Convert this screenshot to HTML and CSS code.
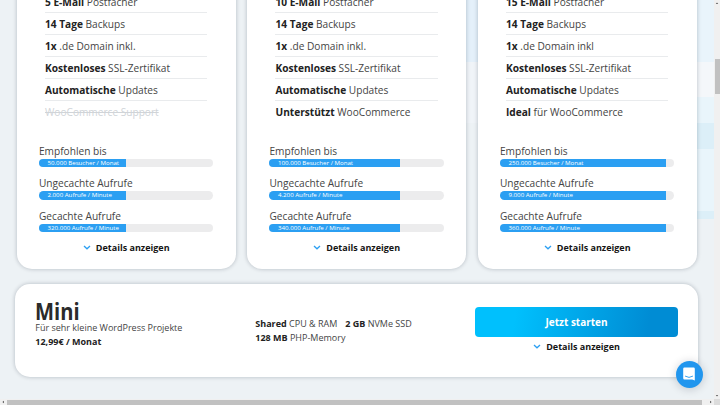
FILE: index.html
```html
<!DOCTYPE html>
<html lang="de">
<head>
    <meta charset="UTF-8">
    <meta name="viewport" content="width=device-width, initial-scale=1.0">
    <title>WordPress Hosting</title>
    <link rel="stylesheet" href="styles.css">
</head>
<body>
    <div class="window">
        <main class="page">
            <div class="plans">
                <div class="card">
                    <ul class="features">
                        <li><b>5 E-Mail</b> Postfächer</li>
                        <li><b>14 Tage</b> Backups</li>
                        <li><b>1x</b> .de Domain inkl.</li>
                        <li><b>Kostenloses</b> SSL-Zertifikat</li>
                        <li><b>Automatische</b> Updates</li>
                        <li class="missing">WooCommerce Support</li>
                    </ul>
                    <div class="limits">
                        <p>Empfohlen bis</p>
                        <div class="bar"><div class="fill" style="width: 50%">50.000 Besucher / Monat</div></div>
                        <p>Ungecachte Aufrufe</p>
                        <div class="bar"><div class="fill" style="width: 50%">2.000 Aufrufe / Minute</div></div>
                        <p>Gecachte Aufrufe</p>
                        <div class="bar"><div class="fill" style="width: 50%">320.000 Aufrufe / Minute</div></div>
                    </div>
                    <a class="details"><svg viewBox="0 0 8 5"><path d="M1 1l3 2.8L7 1"/></svg>Details anzeigen</a>
                </div>
                <div class="card">
                    <ul class="features">
                        <li><b>10 E-Mail</b> Postfächer</li>
                        <li><b>14 Tage</b> Backups</li>
                        <li><b>1x</b> .de Domain inkl.</li>
                        <li><b>Kostenloses</b> SSL-Zertifikat</li>
                        <li><b>Automatische</b> Updates</li>
                        <li><b>Unterstützt</b> WooCommerce</li>
                    </ul>
                    <div class="limits">
                        <p>Empfohlen bis</p>
                        <div class="bar"><div class="fill" style="width: 75%">100.000 Besucher / Monat</div></div>
                        <p>Ungecachte Aufrufe</p>
                        <div class="bar"><div class="fill" style="width: 75%">4.200 Aufrufe / Minute</div></div>
                        <p>Gecachte Aufrufe</p>
                        <div class="bar"><div class="fill" style="width: 75%">340.000 Aufrufe / Minute</div></div>
                    </div>
                    <a class="details"><svg viewBox="0 0 8 5"><path d="M1 1l3 2.8L7 1"/></svg>Details anzeigen</a>
                </div>
                <div class="card">
                    <ul class="features">
                        <li><b>15 E-Mail</b> Postfächer</li>
                        <li><b>14 Tage</b> Backups</li>
                        <li><b>1x</b> .de Domain inkl</li>
                        <li><b>Kostenloses</b> SSL-Zertifikat</li>
                        <li><b>Automatische</b> Updates</li>
                        <li><b>Ideal</b> für WooCommerce</li>
                    </ul>
                    <div class="limits">
                        <p>Empfohlen bis</p>
                        <div class="bar"><div class="fill" style="width: 95%">250.000 Besucher / Monat</div></div>
                        <p>Ungecachte Aufrufe</p>
                        <div class="bar"><div class="fill" style="width: 95%">9.000 Aufrufe / Minute</div></div>
                        <p>Gecachte Aufrufe</p>
                        <div class="bar"><div class="fill" style="width: 95%">360.000 Aufrufe / Minute</div></div>
                    </div>
                    <a class="details"><svg viewBox="0 0 8 5"><path d="M1 1l3 2.8L7 1"/></svg>Details anzeigen</a>
                </div>
            </div>

            <div class="mini">
                <div class="mini-title">
                    <h2>Mini</h2>
                    <p>Für sehr kleine WordPress Projekte</p>
                    <b>12,99€ / Monat</b>
                </div>
                <div class="mini-specs">
                    <span><b>Shared</b> CPU &amp; RAM</span>
                    <span><b>2 GB</b> NVMe SSD</span>
                    <span><b>128 MB</b> PHP-Memory</span>
                </div>
                <div class="mini-order">
                    <a class="button">Jetzt starten</a>
                    <a class="details"><svg viewBox="0 0 8 5"><path d="M1 1l3 2.8L7 1"/></svg>Details anzeigen</a>
                </div>
            </div>
        </main>

        <div class="scroll-y">
            <svg viewBox="0 0 6 6"><path d="M1.8 4L3 2.4 4.2 4z"/></svg>
            <div class="thumb"></div>
            <svg viewBox="0 0 6 6"><path d="M1.8 2L3 3.6 4.2 2z"/></svg>
        </div>
        <div class="scroll-x">
            <svg viewBox="0 0 6 6"><path d="M4 1.8L2.4 3 4 4.2z"/></svg>
            <div class="thumb"></div>
            <svg viewBox="0 0 6 6"><path d="M2 1.8L3.6 3 2 4.2z"/></svg>
        </div>
        <div class="corner"></div>
    </div>

    <!-- Chat launcher -->
    <div class="chat">
        <svg viewBox="0 0 14 14">
            <path fill="#fff" d="M2.4 .6h9.2q1.2 0 1.2 1.2v11.8l-2.6-1.2H2.4q-1.2 0-1.2-1.2V1.8q0-1.2 1.2-1.2z"/>
            <path fill="none" stroke="#2196ee" stroke-width=".9" stroke-linecap="round" d="M3.4 9.3q3.6 2.4 7.2 0"/>
        </svg>
    </div>
</body>
</html>
```
FILE: styles.css
```css
* {
    box-sizing: border-box;
}
body {
    margin: 0;
    font-family: 'Open Sans', 'Noto Sans', sans-serif;
    color: #444;
    overflow: hidden;
}
b {
    color: #222;
    font-weight: 700;
}
p {
    margin: 0;
}
.window {
    display: grid;
    grid-template-columns: 714px 6px;
    grid-template-rows: 399px 6px;
    width: 720px;
    height: 405px;
}
.page {
    overflow: hidden;
    padding: 0 15px;
    background:
        linear-gradient(#e9f4fb 62px, #f4f7fa 62px, #f4f7fa 97px, #e9f5fb 97px, #e9f5fb 123px, #dceff8 123px, #dceff8 149px, #e9f5fb 149px, #e9f5fb 211px, #dceff8 211px, #dceff8 219px, transparent 219px) 697px 0 / 17px 100% no-repeat,
        linear-gradient(#e4f0fa 62px, #f0f4f8 62px, #f0f4f8 123px, transparent 123px) 466px 0 / 12px 100% no-repeat,
        #edf2f5;
}
.plans {
    display: grid;
    grid-template-columns: repeat(3, 219px);
    gap: 11.5px;
    margin: -30px 0 0 1.7px;
}
.card {
    height: 298.5px;
    padding: 20.9px 22.3px 0;
    background-color: white;
    border-radius: 15px;
    box-shadow: 0 0 4px rgba(0, 20, 40, 0.25);
}
.features {
    list-style: none;
    margin: 0 6px;
    padding: 0;
    font-size: 10.15px;
}
.features li {
    height: 22.1px;
    line-height: 23px;
    border-bottom: 1px solid #e9ebed;
    white-space: nowrap;
}
.features li:last-child {
    border-bottom: none;
}
.features .missing {
    color: #d0d4d8;
    text-decoration: line-through;
}
.limits {
    margin-top: 20.2px;
}
.limits p {
    height: 15px;
    font-size: 10.15px;
    line-height: 15px;
}
.bar {
    height: 8.6px;
    margin-bottom: 9px;
    border-radius: 5px;
    background-color: #ececed;
    overflow: hidden;
}
.limits .bar:last-child {
    margin-bottom: 7.8px;
}
.fill {
    height: 100%;
    padding-left: 8.5px;
    background-color: #2b9ff2;
    color: white;
    font-size: 6.15px;
    font-weight: 500;
    line-height: 8px;
    white-space: nowrap;
}
.details {
    display: flex;
    justify-content: center;
    align-items: center;
    gap: 5px;
    height: 14px;
    font-size: 9px;
    font-weight: 700;
    color: #151515;
}
.details svg {
    width: 8px;
    height: 5px;
    fill: none;
    stroke: #2b9ff2;
    stroke-width: 1.3;
}
.mini {
    display: grid;
    grid-template-columns: 220px 219.5px 203.5px;
    height: 93px;
    margin: 15px 0 0 .3px;
    width: 683px;
    padding: 0 20px;
    background-color: white;
    border-radius: 15px;
    box-shadow: 0 0 4px rgba(0, 20, 40, 0.25);
    font-size: 9px;
}
.mini-title {
    padding-top: 16px;
}
.mini-title h2 {
    margin: 0;
    height: 21px;
    font-size: 24px;
    line-height: 22px;
    color: #2b2b2b;
    transform: scaleX(0.84);
    transform-origin: left;
}
.mini-title p,
.mini-title b {
    display: block;
    line-height: 14px;
}
.mini-specs {
    display: flex;
    flex-wrap: wrap;
    align-content: flex-start;
    column-gap: 8px;
    padding: 33px 40px 0 0;
    line-height: 14px;
    white-space: nowrap;
}
.mini-order {
    padding-top: 23px;
}
.button {
    display: block;
    height: 30px;
    margin-bottom: 3px;
    border-radius: 4px;
    background: linear-gradient(100deg, #00c0fd 20%, #008cd4 85%);
    color: white;
    font-size: 10px;
    font-weight: 700;
    line-height: 30px;
    text-align: center;
}
.scroll-y,
.scroll-x,
.corner {
    display: flex;
    background-color: #f0f0f0;
}
.scroll-y {
    flex-direction: column;
}
.scroll-y svg,
.scroll-x svg {
    width: 6px;
    height: 6px;
    fill: #555;
}
.scroll-y .thumb {
    height: 35px;
    margin: 53px .5px auto;
    background-color: #c1c1c1;
}
.scroll-x .thumb {
    width: 695px;
    margin: .5px auto .5px 1px;
    background-color: #c1c1c1;
}
.corner {
    background-color: #dcdcdc;
}
.chat {
    position: fixed;
    right: 17.5px;
    bottom: 17.5px;
    display: flex;
    justify-content: center;
    align-items: center;
    width: 27px;
    height: 27px;
    border-radius: 50%;
    background-color: #2196ee;
    box-shadow: 0 1px 10px rgba(0, 20, 40, 0.2);
}
.chat svg {
    width: 14px;
    height: 14px;
}
```
